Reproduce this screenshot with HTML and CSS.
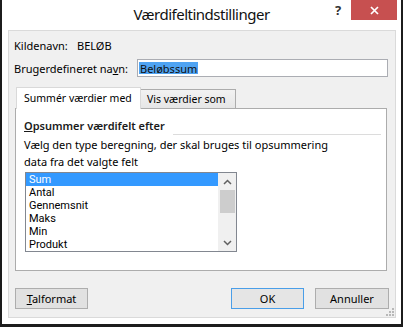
FILE: index.html
```html
<!DOCTYPE html>
<html>
<head>
	<title>Værdifeltindstillinger</title>
	<meta charset="utf-8">
	<link rel="stylesheet" href="styles.css">
</head>
<body>
	<div class="window">
		<div class="titlebar">
			<span class="title">Værdifeltindstillinger</span>
			<div class="controls">
				<span class="help">?</span>
				<span class="close">
					<svg width="9" height="9" viewBox="0 0 9 9"><path d="M1 1L8 8M8 1L1 8" stroke="#fff" stroke-width="1.7" fill="none"/></svg>
				</span>
			</div>
		</div>
		<div class="client">
			<div class="row source">
				<span class="label">Kildenavn:</span>
				<span>BELØB</span>
			</div>
			<div class="row custom">
				<span class="label">Brugerdefineret na<u>v</u>n:</span>
				<div class="input"><span class="sel">Beløbssum</span></div>
			</div>
			<!--faner-->
			<div class="tabs">
				<div class="tab active">Summér værdier med</div>
				<div class="tab">Vis værdier som</div>
			</div>
			<div class="panel">
				<div class="heading">
					<span><u>O</u>psummer værdifelt efter</span>
					<i class="rule"></i>
				</div>
				<p class="desc">Vælg den type beregning, der skal bruges til opsummering<br>data fra det valgte felt</p>
				<div class="listbox">
					<ul>
						<li class="selected">Sum</li>
						<li>Antal</li>
						<li>Gennemsnit</li>
						<li>Maks</li>
						<li>Min</li>
						<li>Produkt</li>
					</ul>
					<div class="scrollbar">
						<span class="arrow">
							<svg width="9" height="6" viewBox="0 0 9 6"><path d="M1 5L4.5 1.5L8 5" stroke="#606060" stroke-width="1.5" fill="none"/></svg>
						</span>
						<span class="thumb"></span>
						<span class="track"></span>
						<span class="arrow">
							<svg width="9" height="6" viewBox="0 0 9 6"><path d="M1 1L4.5 4.5L8 1" stroke="#606060" stroke-width="1.5" fill="none"/></svg>
						</span>
					</div>
				</div>
			</div>
			<div class="buttons">
				<div class="btn"><u>T</u>alformat</div>
				<div class="btn ok">OK</div>
				<div class="btn cancel">Annuller</div>
			</div>
			<svg class="grip" width="8" height="8" viewBox="0 0 8 8">
				<rect x="6" y="0" width="2" height="2" fill="#b8b8b8"/>
				<rect x="3" y="3" width="2" height="2" fill="#b8b8b8"/>
				<rect x="6" y="3" width="2" height="2" fill="#b8b8b8"/>
				<rect x="0" y="6" width="2" height="2" fill="#b8b8b8"/>
				<rect x="3" y="6" width="2" height="2" fill="#b8b8b8"/>
				<rect x="6" y="6" width="2" height="2" fill="#b8b8b8"/>
			</svg>
		</div>
	</div>
</body>
</html>
```

FILE: styles.css
```css
*{
	margin:0;
	padding:0;
	list-style:none;
}
body{
	font-family:"Noto Sans","DejaVu Sans",sans-serif;
	font-size:11px;
	color:#000;
	background:#fff;
}
u{
	text-decoration:underline;
	text-underline-offset:1px;
}
.window{
	box-sizing:border-box;
	width:403px;
	height:327px;
	border:solid #1c1c1c;
	border-width:0 2px 3px 2px;
	background:#fff;
	display:flex;
	flex-direction:column;
}
.titlebar{
	position:relative;
	height:30px;
	line-height:29px;
	text-align:center;
	font-size:15px;
	letter-spacing:-0.5px;
	color:#111;
}
.controls{
	position:absolute;
	top:0;
	right:4px;
	display:flex;
}
.help{
	width:26px;
	height:20px;
	line-height:20px;
	font-size:13px;
	font-weight:700;
	color:#333;
	letter-spacing:0;
}
.close{
	width:46px;
	height:20px;
	background:#c75050;
	display:flex;
	align-items:center;
	justify-content:center;
}
.client{
	position:relative;
	flex:1;
	margin:0 5px 6px 6px;
	padding:7px 6px 0 5px;
	background:#f0f0f0;
	border:1px solid #dadada;
	display:flex;
	flex-direction:column;
}
.row{
	display:flex;
	align-items:center;
}
.source{
	height:15px;
}
.source .label{
	width:63px;
}
.custom{
	margin-top:6px;
}
.custom .label{
	width:123px;
}
.input{
	box-sizing:border-box;
	width:251px;
	height:18px;
	border:1px solid #abadb3;
	background:#fff;
	padding:2px 1px;
	display:flex;
}
.sel{
	background:#4fa3f2;
	line-height:13px;
	padding:0 1px;
	color:#111;
}
.tabs{
	display:flex;
	align-items:flex-end;
	margin:10px 0 0 2px;
	font-size:10.5px;
}
.tab{
	box-sizing:border-box;
	height:20px;
	line-height:18px;
	width:95px;
	padding-left:6px;
	border:1px solid #acacac;
	border-left:none;
	background:#f0f0f0;
	background:linear-gradient(#f2f2f2,#e6e6e6);
}
.tab.active{
	position:relative;
	z-index:1;
	height:22px;
	width:125px;
	line-height:21px;
	padding-left:7px;
	border:1px solid #d9d9d9;
	border-bottom:none;
	background:#fff;
}
.panel{
	box-sizing:border-box;
	width:372px;
	height:163px;
	margin:-1px 0 0 1px;
	padding:9px 5px 0 8px;
	border:1px solid #acacac;
	background:#fff;
}
.heading{
	display:flex;
	line-height:15px;
	font-weight:600;
	color:#1a1a1a;
}
.heading .rule{
	flex:1;
	align-self:flex-end;
	height:1px;
	margin:0 0 -2px 8px;
	background:#dcdcdc;
}
.desc{
	margin-top:3px;
	line-height:17px;
	white-space:nowrap;
}
.listbox{
	box-sizing:border-box;
	width:212px;
	height:80px;
	margin:2px 0 0 1px;
	border:1px solid #828790;
	background:#fff;
	display:flex;
	font-family:Roboto,"Noto Sans",sans-serif;
}
.listbox ul{
	flex:1;
}
.listbox li{
	height:13px;
	line-height:13px;
	padding-left:3px;
}
.listbox li.selected{
	background:#3399ff;
	color:#fff;
}
.scrollbar{
	width:18px;
	background:#f0f0f0;
	display:flex;
	flex-direction:column;
	align-items:center;
}
.scrollbar .arrow{
	height:17px;
	display:flex;
	align-items:center;
	justify-content:center;
}
.scrollbar .thumb{
	width:15px;
	height:23px;
	background:#cdcdcd;
}
.scrollbar .track{
	flex:1;
}
.buttons{
	display:flex;
	margin:17px 0 0 1px;
}
.btn{
	box-sizing:border-box;
	width:73px;
	height:21px;
	line-height:19px;
	text-align:center;
	border:1px solid #adadad;
	background:#e1e1e1;
}
.btn.ok{
	margin-left:auto;
	border-color:#4a9ee8;
	background:#e5e5e5;
}
.btn.cancel{
	width:74px;
	margin-left:11px;
}
.grip{
	position:absolute;
	right:1px;
	bottom:1px;
}
```
